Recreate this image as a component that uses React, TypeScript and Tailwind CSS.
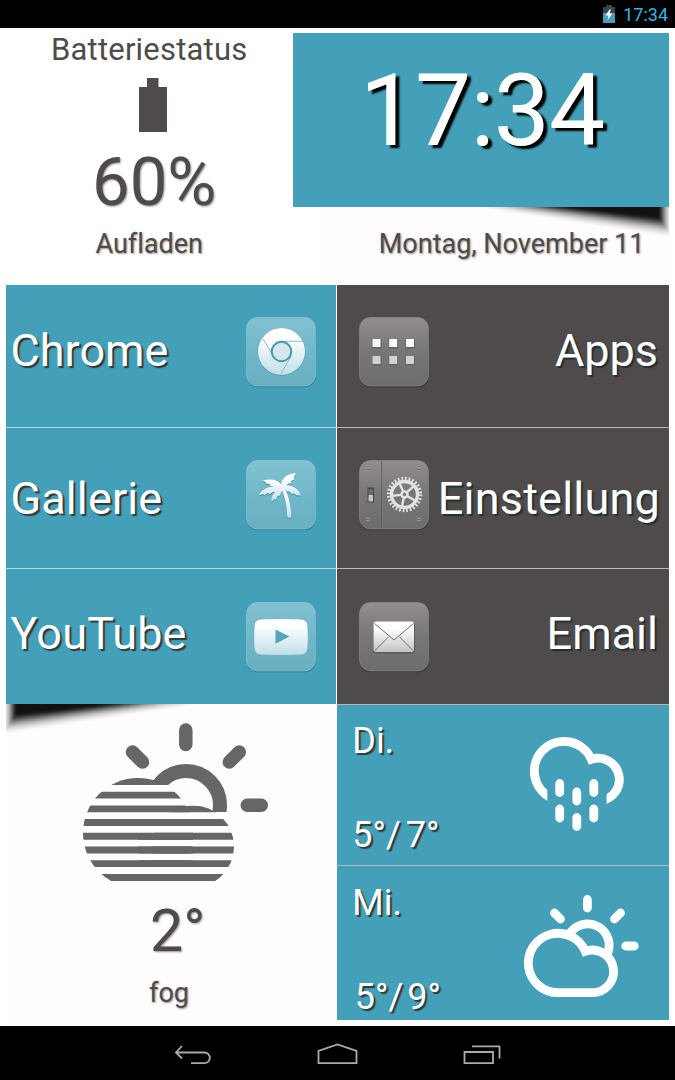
import type { ReactNode } from "react";
import classNames from "clsx";

const LIGHT_SHADOW = "[text-shadow:2px_2px_1px_rgba(50,45,45,0.9)]";
const SOFT_SHADOW = "[text-shadow:1px_1px_2px_rgba(79,75,74,0.6)]";

function StatusBar() {
  return (
    <div className="flex h-7 items-start justify-end bg-black pr-[7px]">
      <svg className="mt-[5px] mr-2" width="12" height="18" viewBox="0 0 12 18">
        <path d="M3 0h6v2h3v6H0V2h3z" fill="#3c4447" />
        <path d="M0 8h12v10H0z" fill="#43a0b8" />
        <path d="M6.5 4.5L2.5 10.5H5.5L4.5 15L9.5 8.5H6.5L8 4.5z" fill="#fff" />
      </svg>
      <span className="mt-[6px] text-[18px] leading-[18px] text-[#33b5e5]">
        17:34
      </span>
    </div>
  );
}

function BatteryPanel() {
  return (
    <div className="flex h-[252px] w-[287px] flex-col items-start whitespace-nowrap text-[#4f4b4a]">
      <h2 className="mt-[2px] ml-[45px] text-[31px] leading-[30px] tracking-[0.2px]">
        Batteriestatus
      </h2>
      <svg className="mt-[13px] ml-[133px]" width="28" height="54">
        <path d="M8 0h11.5v9H28v45H0V9h8z" fill="#4f4b4a" />
      </svg>
      <div
        className={classNames(
          "mt-[16px] ml-[86px] text-[67px] leading-[68px]",
          SOFT_SHADOW
        )}
      >
        60%
      </div>
      <div
        className={classNames(
          "mt-[15px] ml-[89.5px] text-[27px] leading-[26px] [font-variant-ligatures:none]",
          SOFT_SHADOW
        )}
      >
        Aufladen
      </div>
    </div>
  );
}

// wedge shadow below a panel, built from layers that get shorter and darker
function WedgeShadow({ id, className }: { id: string; className: string }) {
  const layers = Array.from({ length: 10 }, (_, i) => i);
  return (
    <svg className={className} width="200" height="36" viewBox="0 0 200 36">
      <filter id={id} x="-10%" y="-50%" width="120%" height="200%">
        <feGaussianBlur stdDeviation="1.2" />
      </filter>
      <g filter={"url(#" + id + ")"}>
        {layers.map((i) => (
          <path
            key={i}
            d={`M${12 + i * 9} -8V0L${202 - i * 1.3} ${29 - i * 2}V-8z`}
            fill="#050203"
            fillOpacity={0.05 + i * i * 0.006}
          />
        ))}
      </g>
    </svg>
  );
}

function ClockPanel() {
  return (
    <div className="flex h-[252px] w-[376.5px] flex-col">
      <div className="h-[174px] bg-[#43a0b8]">
        <div className="pt-[28px] pl-[67px] text-[100px] leading-[100px] tracking-[-0.9px] whitespace-nowrap text-white [text-shadow:4px_3px_2px_#000]">
          17:34
        </div>
      </div>
      <div className="relative ml-[26px] flex-1 bg-[#fefcfd]">
        <WedgeShadow id="wedgeRight" className="absolute top-0 right-0" />
        <div
          className={classNames(
            "relative mt-[24px] ml-[60px] text-[27px] leading-[27px] whitespace-nowrap text-[#4f4b4a]",
            SOFT_SHADOW
          )}
        >
          Montag, November 11
        </div>
      </div>
    </div>
  );
}

function IconPlate({ dark, children }: { dark?: boolean; children: ReactNode }) {
  const id = dark ? "plateDark" : "plateLight";
  return (
    <svg
      className="mt-8 shrink-0 overflow-visible"
      width="70"
      height="70"
      viewBox="0 0 70 70"
    >
      <defs>
        <linearGradient id={id} x1="0" y1="0" x2="0" y2="1">
          <stop offset="0" stopColor={dark ? "#928e8f" : "#83c1d1"} />
          <stop offset="0.5" stopColor={dark ? "#787576" : "#6fb8ca"} />
          <stop offset="1" stopColor={dark ? "#6e6d6b" : "#69afc0"} />
        </linearGradient>
        <linearGradient id={id + "Glyph"} x1="0" y1="0" x2="0" y2="1">
          <stop offset="0.2" stopColor="#fff" />
          <stop offset="1" stopColor={dark ? "#c4c4c4" : "#bfdfe8"} />
        </linearGradient>
      </defs>
      <rect
        x="0.5"
        y="1.3"
        width="69.5"
        height="69"
        rx="11"
        fill={dark ? "#2c383c" : "#2f7f95"}
      />
      <rect
        x="0.5"
        y="0.5"
        width="69"
        height="68.5"
        rx="11"
        fill={"url(#" + id + ")"}
        stroke={dark ? "#9a9899" : "#9bcfdb"}
        strokeOpacity="0.5"
      />
      {children}
    </svg>
  );
}

function ChromeIcon() {
  return (
    <IconPlate>
      <circle cx="35.5" cy="35" r="23.9" fill="#4a9eb4" />
      <circle cx="35.5" cy="34.5" r="23.5" fill="url(#plateLightGlyph)" />
      <path
        d="M35.5 24.3H57M26 37L16.8 21.5M44.5 40L34.5 57.5"
        stroke="#9bb9c1"
        strokeWidth="1"
      />
      <circle
        cx="35.5"
        cy="34.5"
        r="9.7"
        fill="#d6e8ed"
        stroke="#4a9bb0"
        strokeWidth="2"
      />
    </IconPlate>
  );
}

function PalmIcon() {
  return (
    <IconPlate>
      <g
        fill="url(#plateLightGlyph)"
        className="[filter:drop-shadow(0_1px_0.5px_#3d8ca2)]"
      >
        <path d="M35 28C39 37 41 46 41 56Q43 59.500 45.200 56.500C45 45 42.500 35 38 27z" />
        <path d="M35 24C31 19.500 24 18.500 16.500 20.500L20 22.300L19.500 23.500L24 24.300L24 26L28 26.500C21 27 15 30 13 35.500L17 34L18.500 35.200L21.500 33L24 34L27 31.800L29 32C26.500 34.500 25 38 25.500 42L28 39.500L30 39.500L31.500 36L34 35.500L36.500 29.800L39 29.500L41 31.500L43.500 31.500L45.500 33.800L48 33.500L50.500 35.300L54.700 35.500C53 30 47.500 25.500 40.500 25.300L42.500 23.500L45 23.300L45.500 20.800L48 19.500L47.800 17L50 13.300C43 13.500 37 16.500 35 24z" />
      </g>
    </IconPlate>
  );
}

function YouTubeIcon() {
  return (
    <IconPlate>
      <path
        d="M15 17Q35 16 55 17Q61.500 17.500 61.900 24Q62.600 35 61.900 46Q61.500 52.500 55 53Q35 54 15 53Q8.500 52.500 8.100 46Q7.400 35 8.100 24Q8.500 17.500 15 17z"
        fill="url(#plateLightGlyph)"
        stroke="#5aa9bd"
        strokeWidth="0.7"
      />
      <path d="M29.5 27.500L43.500 34.500L29.500 41.800z" fill="#55a5b9" />
    </IconPlate>
  );
}

function AppsIcon() {
  return (
    <IconPlate dark>
      {[13.5, 30.2, 47].map((x) => (
        <g key={x}>
          <rect x={x - 0.5} y="22" width="9.500" height="9.500" fill="#636161" />
          <rect x={x} y="22" width="8" height="8" fill="#fafafa" />
          <rect x={x - 0.5} y="39" width="9.500" height="9.500" fill="#636161" />
          <rect x={x} y="39" width="8" height="8" fill="#d2d2d2" />
        </g>
      ))}
    </IconPlate>
  );
}

function SettingsIcon() {
  return (
    <IconPlate dark>
      <path d="M22.8 1V69" stroke="#5b5959" strokeWidth="1" />
      <path d="M23.8 1V69" stroke="#8b8989" strokeWidth="0.6" />
      <rect x="8.500" y="27.500" width="6.500" height="15" fill="#454242" />
      <rect x="9.500" y="29" width="4.500" height="6" fill="#6b6969" />
      <rect x="9.500" y="35" width="4.500" height="6.500" fill="#c4c4c4" />
      {[
        [9, 9.5],
        [60, 9.5],
        [9, 59.5],
        [60, 59.5],
      ].map(([x, y]) => (
        <g key={x + "-" + y}>
          <circle cx={x} cy={y} r="2" fill="#9a9898" />
          <path d={`M${x - 1.5} ${y}h3`} stroke="#5b5858" strokeWidth="0.9" />
        </g>
      ))}
      <g fill="none" stroke="#e3e3e3">
        <circle
          cx="45.500"
          cy="34.500"
          r="16"
          strokeWidth="3.400"
          strokeDasharray="1.700 1.891"
        />
        <circle cx="45.500" cy="34.500" r="13" strokeWidth="3.300" />
        <circle cx="45.500" cy="34.500" r="3" strokeWidth="2.400" />
        {[30, 102, 174, 246, 318].map((deg) => (
          <path
            key={deg}
            d="M49 34.500H57.500"
            strokeWidth="2.400"
            transform={`rotate(${deg} 45.5 34.5)`}
          />
        ))}
      </g>
    </IconPlate>
  );
}

function EmailIcon() {
  return (
    <IconPlate dark>
      <rect x="14" y="20" width="42" height="31.500" rx="3" fill="#5b5959" />
      <rect
        x="14.500"
        y="19.500"
        width="40.500"
        height="30.500"
        rx="2.500"
        fill="url(#plateDarkGlyph)"
      />
      <path
        d="M15.500 21.500L35 38L54.500 21.500M16 48.500L29.500 35M54 48.500L40.500 35"
        fill="none"
        stroke="#6e6e6e"
        strokeWidth="1"
      />
    </IconPlate>
  );
}

type TileProps = {
  label: string;
  icon: ReactNode;
  dark?: boolean;
  size: string;
  text: string;
};

function Tile({ label, icon, dark, size, text }: TileProps) {
  return (
    <div
      className={classNames(
        "flex items-start justify-between",
        dark ? "bg-[#4f4b4a] pl-[21.5px]" : "bg-[#43a0b8] pr-[20px] pl-[4.5px]",
        size
      )}
    >
      {dark && icon}
      <span
        className={classNames(
          "text-[45px] leading-[45px] whitespace-nowrap text-white",
          dark
            ? "[text-shadow:2px_2px_1px_rgba(25,45,52,0.9)]"
            : LIGHT_SHADOW,
          text
        )}
      >
        {label}
      </span>
      {!dark && icon}
    </div>
  );
}

function FogIcon() {
  return (
    <svg
      className="mt-[11px] ml-[69px]"
      width="200"
      height="175"
      viewBox="75 715 200 175"
    >
      <clipPath id="fogStripes">
        {[778, 791.7, 805.4, 819, 832.8, 846.5, 860.2, 874].map((y) => (
          <rect key={y} x="75" y={y} width="170" height={6.9} />
        ))}
      </clipPath>
      <clipPath id="fogSun">
        <path d="M140 755H230V812H186V785H140z" />
      </clipPath>
      <g stroke="#666" strokeWidth="13.500" strokeLinecap="round">
        <path d="M185.800 730V744.500M132.500 752L142.500 762M239.300 752L229.300 762M247.300 805.200H261.300" />
      </g>
      <circle
        cx="186"
        cy="805"
        r="34"
        fill="none"
        stroke="#666"
        strokeWidth="14"
        clipPath="url(#fogSun)"
      />
      <g fill="#666" clipPath="url(#fogStripes)">
        <circle cx="138" cy="833" r="55" />
        <circle cx="193" cy="846.500" r="41" />
        <path d="M138 833H193V887H138z" />
      </g>
    </svg>
  );
}

function RainIcon() {
  return (
    <svg
      className="mt-[27px] mr-[38px]"
      width="106"
      height="106"
      viewBox="525 732 106 106"
    >
      <clipPath id="rainCloud">
        <path d="M525 732H631V812H606.600V775H547.300V812H525z" />
      </clipPath>
      <g fill="none" stroke="#fff" strokeWidth="8.800">
        <path
          d="M552 798.200A29.700 29.700 0 1 1 591.300 759.300A21.300 21.300 0 1 1 601 800.600"
          clipPath="url(#rainCloud)"
        />
        <path
          d="M559.700 783.500V792.500M576.800 792V801M593.800 783.500V792.500M559.700 809V818M576.800 817.500V826.500M593.800 809V818"
          strokeLinecap="round"
        />
      </g>
    </svg>
  );
}

function CloudSunIcon() {
  return (
    <svg
      className="mt-[24px] mr-[25px]"
      width="125"
      height="112"
      viewBox="519 890 125 112"
    >
      <g fill="none" stroke="#fff" strokeWidth="8.800">
        <path d="M558 992.700A29.700 29.700 0 1 1 585.300 951.300A21.300 21.300 0 1 1 591.500 992.700z" />
        <path d="M569 935A21.200 21.200 0 0 1 606.500 955.500" />
        <path
          d="M587.400 899.500V908M554.500 913L560.500 919M620.500 913L614.500 919M625.700 946H634.300"
          strokeLinecap="round"
        />
      </g>
    </svg>
  );
}

type ForecastProps = {
  day: string;
  low: string;
  high: string;
  gap: string;
  indent: string;
  size: string;
  icon: ReactNode;
};

function Forecast({ day, low, high, gap, indent, size, icon }: ForecastProps) {
  return (
    <div
      className={classNames(
        "flex items-start justify-between bg-[#43a0b8] pl-[15px] text-[36px] leading-[36px] whitespace-nowrap text-white",
        LIGHT_SHADOW,
        size
      )}
    >
      <div>
        <div>{day}</div>
        <div className={classNames("mt-[58px] flex", gap, indent)}>
          <span>{low}/</span>
          <span>{high}</span>
        </div>
      </div>
      {icon}
    </div>
  );
}

function WeatherPanel() {
  return (
    <div className="relative flex h-[316px] flex-col items-start bg-[#fefcfd] text-[#4f4b4a]">
      <WedgeShadow id="wedgeLeft" className="absolute top-0 left-0 -scale-x-100" />
      <FogIcon />
      <div
        className={classNames(
          "mt-[11px] ml-[144px] text-[59px] leading-[60px]",
          SOFT_SHADOW
        )}
      >
        2°
      </div>
      <div
        className={classNames(
          "mt-[19px] ml-[143px] text-[27px] leading-[26px]",
          SOFT_SHADOW
        )}
      >
        fog
      </div>
    </div>
  );
}

function NavBar() {
  return (
    <div className="flex h-[54px] items-start bg-black pt-[17px] pl-[174px]">
      <svg width="37" height="22" fill="none" stroke="#aaa" strokeWidth="1.800">
        <path d="M8 3L2 9.500L8 15.500M2 9.500H30.500A5.300 5.300 0 0 1 30.500 20.200H17" />
      </svg>
      <svg
        className="ml-[106px]"
        width="41"
        height="22"
        fill="none"
        stroke="#aaa"
        strokeWidth="1.800"
      >
        <path d="M1.500 20.200V8L20.500 1.500L39.500 8V20.200z" />
      </svg>
      <svg
        className="ml-[105px]"
        width="38"
        height="22"
        fill="none"
        stroke="#aaa"
        strokeWidth="1.800"
      >
        <path d="M1.500 9H30V20.200H1.500zM9 3.300H36.500V15.500" />
      </svg>
    </div>
  );
}

export default function App() {
  return (
    <div className="h-[1080px] w-[675px] overflow-hidden bg-white font-['Roboto',sans-serif]">
      <StatusBar />
      <div className="h-[998px] px-[6px] pt-[5px]">
        <div className="flex">
          <BatteryPanel />
          <ClockPanel />
        </div>
        <div className="flex gap-[1px]">
          <div className="w-[330.5px]">
            <div className="flex flex-col gap-[1px] bg-[#b5dae3]">
              <Tile label="Chrome" icon={<ChromeIcon />} size="h-[142px]" text="mt-[43px]" />
              <Tile label="Gallerie" icon={<PalmIcon />} size="h-[140px]" text="mt-[48px] tracking-[0.1px]" />
              <Tile label="YouTube" icon={<YouTubeIcon />} size="h-[135px] pt-[1px]" text="mt-[41px] tracking-[0.2px]" />
            </div>
            <WeatherPanel />
          </div>
          <div className="flex w-[332px] flex-col gap-[1px] bg-[#b9b7b7]">
            <Tile dark label="Apps" icon={<AppsIcon />} size="h-[142px]" text="mt-[43px] mr-[11px]" />
            <Tile dark label="Einstellung" icon={<SettingsIcon />} size="h-[140px]" text="mt-[48px] mr-[9px] tracking-[0.2px]" />
            <Tile dark label="Email" icon={<EmailIcon />} size="h-[135px] pt-[1px]" text="mt-[41px] mr-[11px]" />
            <Forecast
              day="Di."
              low="5°"
              high="7°"
              gap="gap-[5px]"
              indent="ml-0"
              size="h-[160px] pt-[18px]"
              icon={<div className="-mt-[18px]"><RainIcon /></div>}
            />
            <Forecast
              day="Mi."
              low="5°"
              high="9°"
              gap="gap-[4px]"
              indent="ml-[2.5px]"
              size="h-[154px] pt-[19px]"
              icon={<div className="-mt-[19px]"><CloudSunIcon /></div>}
            />
          </div>
        </div>
      </div>
      <NavBar />
    </div>
  );
}
